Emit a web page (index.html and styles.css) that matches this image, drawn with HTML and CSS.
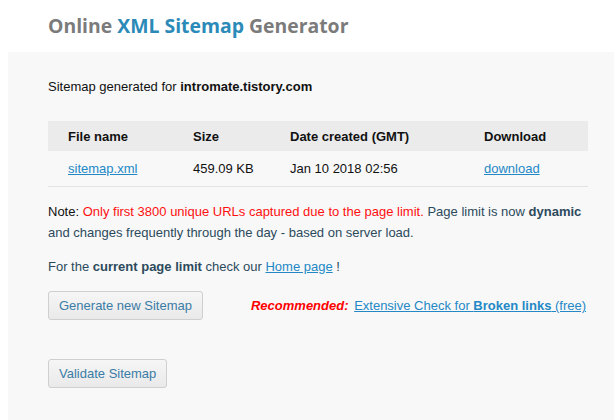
FILE: index.html
```html
<!DOCTYPE html>
<html lang="en">
<head>
  <meta charset="UTF-8">
  <title>Online XML Sitemap Generator</title>
  <link rel="stylesheet" href="styles.css">
</head>
<body>
  <h1 class="title">Online <span class="accent">XML Sitemap</span> Generator</h1>

  <div class="panel">
    <p class="generated">Sitemap generated for <b>intromate.tistory.com</b></p>

    <table class="files">
      <tr>
        <th class="c-name">File name</th>
        <th class="c-size">Size</th>
        <th class="c-date">Date created (GMT)</th>
        <th class="c-dl">Download</th>
      </tr>
      <tr>
        <td><a href="#">sitemap.xml</a></td>
        <td>459.09 KB</td>
        <td>Jan 10 2018 02:56</td>
        <td><a href="#">download</a></td>
      </tr>
    </table>

    <p class="note"><span class="black">Note:</span> <span class="red">Only first 3800 unique URLs captured due to the page limit.</span> Page limit is now <b>dynamic</b> and changes frequently through the day - based on server load.</p>

    <p class="limit">For the <b>current page limit</b> check our <a href="#">Home page</a> !</p>

    <div class="actions">
      <button class="btn">Generate new Sitemap</button>
      <div class="recommend">
        <span class="rec-label">Recommended:</span>
        <a href="#">Extensive Check for <b>Broken links</b> (free)</a>
      </div>
    </div>

    <div class="actions validate">
      <button class="btn">Validate Sitemap</button>
    </div>
  </div>
</body>
</html>
```

FILE: styles.css
```css
body {
  margin: 0;
  background: #fff;
  font-family: "Liberation Sans", Arial, sans-serif;
  font-size: 13px;
  color: #2c4a5c;
}
.title {
  margin: 0;
  padding: 12px 0 0 48px;
  height: 40px;
  box-sizing: border-box;
  font-family: "Open Sans", sans-serif;
  font-size: 19.4px;
  font-weight: 700;
  line-height: 28px;
  color: #7b7b7b;
}
.title .accent {
  color: #2b8ab8;
}
.panel {
  margin: 12px 0 0 8px;
  background: #f8f8f8;
  padding: 27px 0 0 40px;
  height: calc(100vh - 52px);
  box-sizing: border-box;
  overflow: hidden;
}
.generated {
  margin: 0;
  color: #111;
  line-height: 16px;
}
.files {
  margin-top: 26px;
  width: 540px;
  border-collapse: collapse;
  color: #111;
}
.files th {
  background: #ebebeb;
  text-align: left;
  height: 30px;
  padding: 0;
  font-weight: 700;
}
.files td {
  height: 35px;
  padding: 0;
  border-bottom: 1px solid #e3e3e3;
}
.files th:first-child, .files td:first-child {
  padding-left: 20px;
  width: 125px;
}
.c-size { width: 97px; }
.c-date { width: 194px; }
a {
  color: #2488c6;
}
.note {
  margin: 14px 0 0;
  width: 540px;
  line-height: 21px;
}
.note .black { color: #111; }
.note .red { color: #ff1010; }
.limit {
  margin: 16px 0 0;
  line-height: 16px;
}
.actions {
  display: flex;
  align-items: center;
  margin-top: 16px;
}
.validate {
  margin-top: 39px;
}
.btn {
  font-family: "Liberation Sans", Arial, sans-serif;
  font-size: 13px;
  color: #3b7ca6;
  background: linear-gradient(#f6f6f6, #e9e9e9);
  border: 1px solid #cfcfcf;
  border-radius: 3px;
  height: 29px;
  padding: 0 10px;
}
.recommend {
  margin-left: 48px;
  white-space: nowrap;
}
.rec-label {
  color: #f00;
  font-weight: 700;
  font-style: italic;
  margin-right: 2px;
}
```
